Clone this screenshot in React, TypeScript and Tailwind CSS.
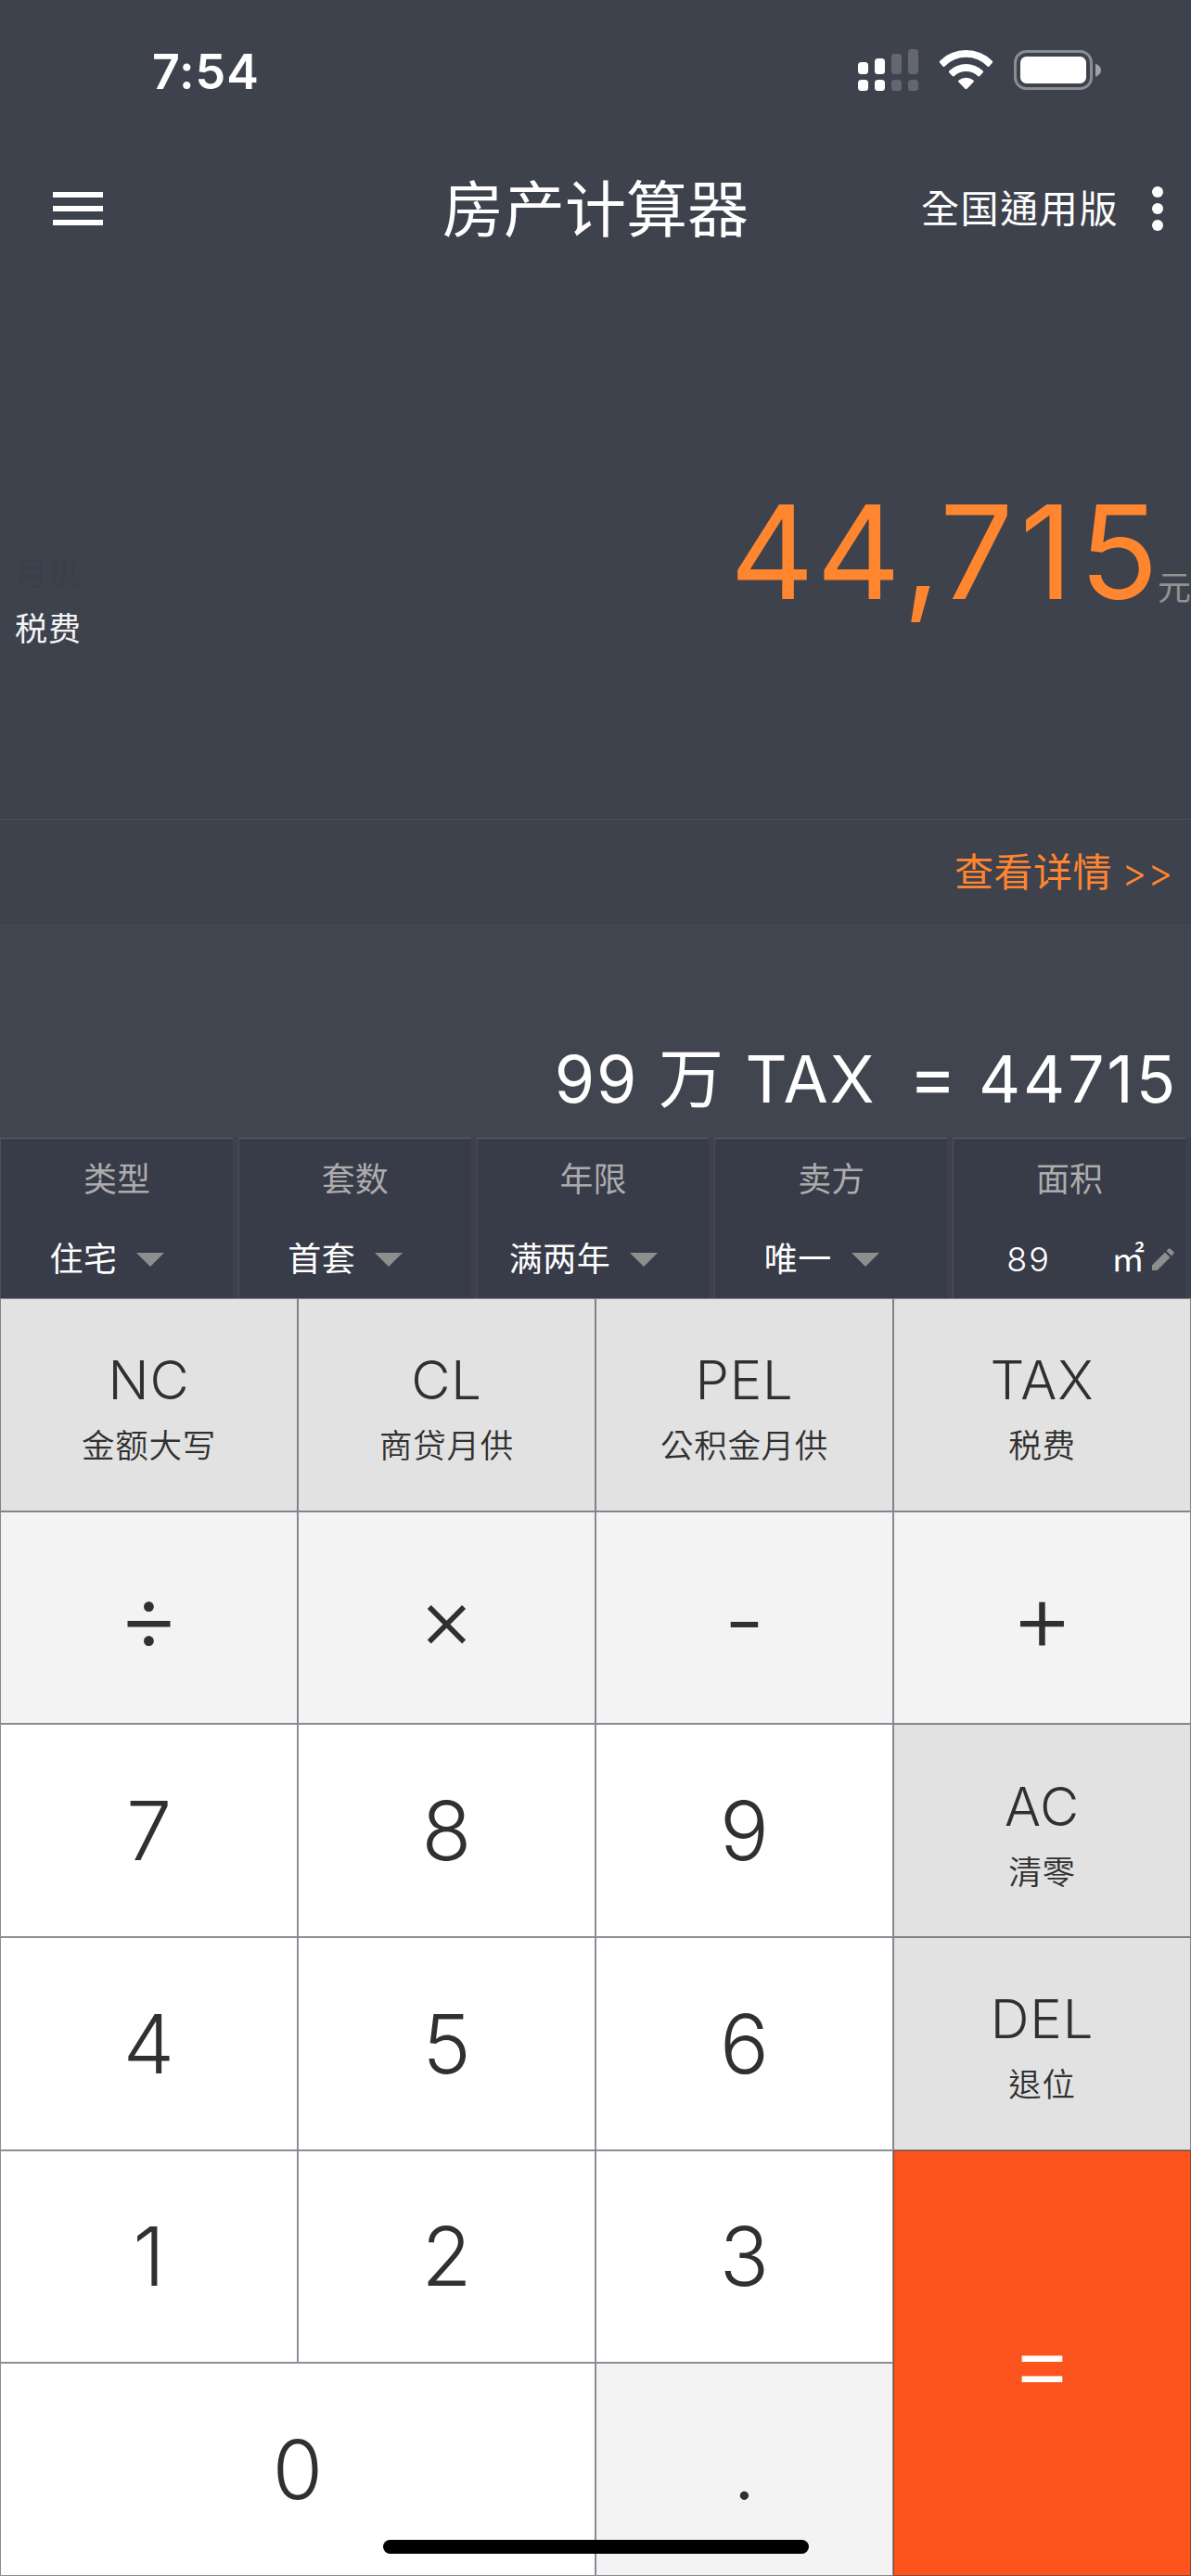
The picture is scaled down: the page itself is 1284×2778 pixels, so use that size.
import { useState } from "react";

const filters = [
  { label: '类型', value: '住宅' },
  { label: '套数', value: '首套' },
  { label: '年限', value: '满两年' },
  { label: '卖方', value: '唯一' },
];

const keys = [
  { main: 'NC', sub: '金额大写', style: 'bg-[#e2e2e2]' },
  { main: 'CL', sub: '商贷月供', style: 'bg-[#e2e2e2]' },
  { main: 'PEL', sub: '公积金月供', style: 'bg-[#e2e2e2]' },
  { main: 'TAX', sub: '税费', style: 'bg-[#e2e2e2]' },
  { main: '÷', style: 'bg-[#f3f3f3]', size: 'text-[104px] pb-[3px]' },
  { main: '×', style: 'bg-[#f3f3f3]', size: 'text-[93px] pb-[1px]' },
  { main: '-', style: 'bg-[#f3f3f3]', size: 'text-[97px] pt-[5px]' },
  { main: '+', style: 'bg-[#f3f3f3]', size: 'text-[104px] pb-[3px]' },
  { main: '7', style: 'bg-white' },
  { main: '8', style: 'bg-white' },
  { main: '9', style: 'bg-white' },
  { main: 'AC', sub: '清零', style: 'bg-[#e2e2e2]' },
  { main: '4', style: 'bg-white' },
  { main: '5', style: 'bg-white' },
  { main: '6', style: 'bg-white' },
  { main: 'DEL', sub: '退位', style: 'bg-[#e2e2e2]' },
  { main: '1', style: 'bg-white' },
  { main: '2', style: 'bg-white' },
  { main: '3', style: 'bg-white' },
  { main: '=', style: 'bg-[#fd541e] text-white row-span-2', size: 'text-[107px] pb-[4px]' },
  { main: '0', style: 'bg-white col-span-2' },
  { main: '.', style: 'bg-[#f3f3f3]' },
];

function StatusBar() {
  return (
    <div className="flex h-[150px] justify-between pl-[164px] pr-[96px] pt-[51px]">
      <span className="mt-[1px] h-[52px] text-[52px] leading-[52px] font-semibold tracking-[0.9px]">7:54</span>
      <svg width="264" height="48" viewBox="924 51 264 48" fill="#fff">
        {/* signal, two sims */}
        <rect x="925" y="67" width="11" height="13" rx="3.5" />
        <rect x="943" y="63" width="11" height="17" rx="3.5" />
        <rect x="961" y="58" width="11" height="22" rx="3.5" fillOpacity="0.2" />
        <rect x="979" y="53" width="11" height="27" rx="3.5" fillOpacity="0.2" />
        <rect x="925" y="86" width="11" height="12" rx="3.5" />
        <rect x="943" y="86" width="11" height="12" rx="3.5" />
        <rect x="961" y="86" width="11" height="12" rx="3.5" fillOpacity="0.2" />
        <rect x="979" y="86" width="11" height="12" rx="3.5" fillOpacity="0.2" />
        {/* wifi */}
        <path d="M1013.2 65.8a40 40 0 0 1 56.6 0q.9 1 0 2l-3.3 3.6q-1 1-2 0a32.5 32.5 0 0 0-46 0q-1 1-2 0l-3.3-3.6q-.9-1 0-2z" />
        <path d="M1023.4 76.2a26.5 26.5 0 0 1 36.2 0q1 1 .1 2l-3.5 3.8q-1 1-2 .1a18.6 18.6 0 0 0-25.4 0q-1 .9-2-.1l-3.5-3.8q-.9-1 .1-2z" />
        <path d="M1033.6 86.6a12.6 12.6 0 0 1 15.8 0q1 1 .1 2l-7 7.2q-1 .9-2 0l-7-7.2q-.9-1 .1-2z" />
        {/* battery */}
        <rect x="1094.5" y="55.5" width="82" height="40" rx="12" fill="none" stroke="#fff" strokeOpacity="0.4" strokeWidth="3" />
        <rect x="1100" y="61" width="71" height="29" rx="6.5" />
        <path d="M1181 68.7c3.6 1.2 6 4 6 7s-2.4 5.8-6 7z" fillOpacity="0.5" />
      </svg>
    </div>
  );
}

export default function App() {

  const [result] = useState(44715);
  const [thousands, rest] = result.toLocaleString('en-US').split(',');

  return (
    <div className="relative flex h-[2778px] w-[1284px] flex-col overflow-hidden bg-[#3e424d] text-white font-['Inter','Noto_Sans_CJK_SC',sans-serif]">
      <StatusBar />

      {/* ===== HEADER ===== */}
      <div className="grid h-[150px] grid-cols-[1fr_auto_1fr] items-center">
        <div className="ml-[57px] flex w-[54px] flex-col gap-[8.5px]">
          <div className="h-[6.5px] bg-white"></div>
          <div className="h-[6.5px] bg-white"></div>
          <div className="h-[6.5px] bg-white"></div>
        </div>
        <h1 className="pt-[2px] text-[66px] leading-[80px]">房产计算器</h1>
        <div className="flex items-center justify-end pr-[30px]">
          <span className="text-[41px] leading-[50px] tracking-[1.6px] font-['Inter','Noto_Sans_CJK_TC',sans-serif]">全国通用版</span>
          <svg className="ml-[36px]" width="12" height="48" viewBox="0 0 12 48" fill="#fff">
            <circle cx="6" cy="6" r="6" />
            <circle cx="6" cy="24" r="6" />
            <circle cx="6" cy="42" r="6" />
          </svg>
        </div>
      </div>

      {/* ===== RESULT ===== */}
      <div className="flex h-[583px] justify-between">
        <div className="ml-4 pt-[288px] text-[35px] leading-[60px] tracking-[1px]">
          <p className="text-[#3b3f4a]">月供</p>
          <p className="text-[#f4f4f4]">税费</p>
        </div>
        <div className="flex pt-[225px]">
          <p className="text-[140.5px] leading-[140px] text-[#ff862f]">
            <span className="tracking-[2.5px]">{thousands}</span>
            <span className="-tracking-[1px]">,</span>
            <span className="tracking-[7px]">{rest.slice(0, -1)}</span>
            <span className="tracking-[-4px]">{rest.slice(-1)}</span>
          </p>
          <span className="mt-[84px] ml-[3px] h-[50px] text-[36px] leading-[50px] text-[#929292]">元</span>
        </div>
      </div>
      <div className="flex h-[114px] items-center justify-end border-t border-[#4a4e59] pr-[19px] text-[42px] leading-[50px] text-[#ff862f]">
        <span className="tracking-[0.5px]">查看详情</span>
        <span className="ml-[10px] font-light tracking-[0.5px]">&gt;&gt;</span>
      </div>
      <div className="flex h-[230px] items-end justify-end border-t border-[#464954] bg-[#414550] pr-[14px] pb-[23px]">
        <p className="text-[70px] leading-[80px] tracking-[1.9px] whitespace-pre">
          99 万 TAX<span className="tracking-[-2px]">{'  '}</span>
          <span className="text-[78px]">=</span> <span className="tracking-[2.8px]">{result}</span>
        </p>
      </div>

      {/* ===== FILTERS ===== */}
      <div className="grid h-[173px] grid-cols-5 bg-[#3e414c] text-[36px]">
        {filters.map((item, index) => (
          <div key={index} className="mr-[6px] border-t border-l border-t-[#5e616c] border-l-[#4c4f5a] bg-[#383b48] pt-[22px] text-center">
            <p className="leading-[44px] text-[#acacac]">{item.label}</p>
            <div className="mt-[42px] mr-[21px] flex items-center justify-center">
              <span className="leading-[44px] tracking-[0.5px]">{item.value}</span>
              <svg className="ml-[21px]" width="30" height="15" viewBox="0 0 30 15">
                <path d="M0 0h30L15 15z" fill="#8e8e8e" />
              </svg>
            </div>
          </div>
        ))}
        <div className="mr-[6px] border-t border-l border-t-[#5e616c] border-l-[#50535e] bg-[#383b48] pt-[22px] text-center">
          <p className="leading-[44px] text-[#acacac]">面积</p>
          <div className="mt-[42px] flex items-center justify-end pr-[12px]">
            <span className="leading-[44px] font-light tracking-[2px]">89</span>
            <span className="ml-[65px] leading-[44px]">㎡</span>
            <svg className="ml-[8px]" width="24" height="24" viewBox="0 0 24 24" fill="#8e8e8e">
              <path d="M0 18.5L14 4.5l5.5 5.5-14 14H0zM15.5 3l2.2-2.2q1.1-1.1 2.2 0l3.3 3.3q1.1 1.1 0 2.2L21 8.5z" />
            </svg>
          </div>
        </div>
      </div>

      {/* ===== KEYPAD ===== */}
      <div className="grid h-[1378px] grid-cols-4 grid-rows-6 bg-white text-[#303030]">
        {keys.map((key) => (
          <div
            key={key.main}
            className={`flex flex-col items-center justify-center border border-[#3e425099] ${key.style}`}
          >
            {key.sub ? (
              <>
                <p className="mt-[2px] text-[58px] leading-[70px] font-light tracking-[0.8px]">{key.main}</p>
                <p className="mt-[7px] mb-[-12px] text-[35.5px] leading-[60px] font-[350] tracking-[0.7px] font-['Inter','Noto_Sans_CJK_TC',sans-serif]">{key.sub}</p>
              </>
            ) : (
              <p className={`leading-[100px] font-light ${key.size || 'text-[88px]'}`}>{key.main}</p>
            )}
          </div>
        ))}
      </div>

      {/* home indicator */}
      <div className="absolute bottom-[24px] left-[413px] h-[15px] w-[459px] rounded-full bg-black"></div>
    </div>
  );
}
